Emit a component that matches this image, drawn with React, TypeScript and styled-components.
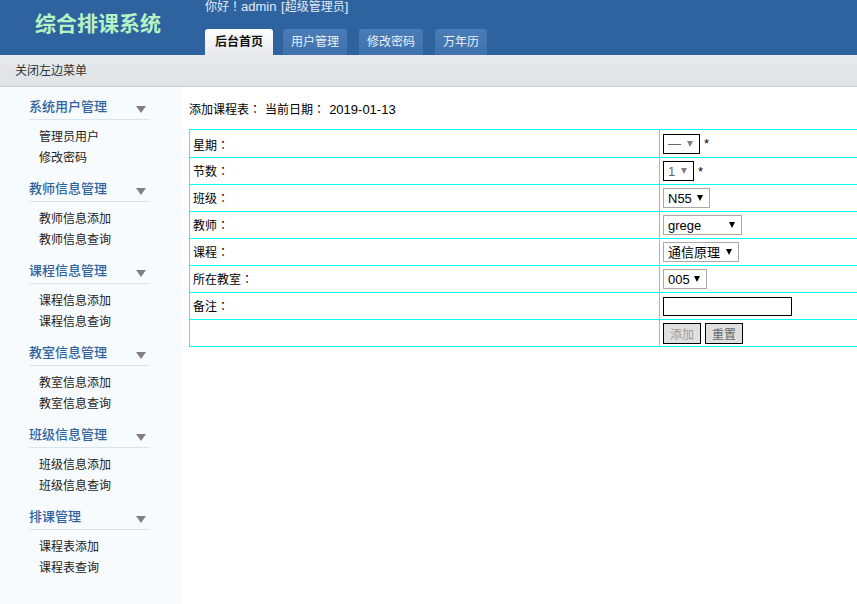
import React from 'react'
import styled, { createGlobalStyle } from 'styled-components'

const menu = [
  { title: '系统用户管理', items: ['管理员用户', '修改密码'] },
  { title: '教师信息管理', items: ['教师信息添加', '教师信息查询'] },
  { title: '课程信息管理', items: ['课程信息添加', '课程信息查询'] },
  { title: '教室信息管理', items: ['教室信息添加', '教室信息查询'] },
  { title: '班级信息管理', items: ['班级信息添加', '班级信息查询'] },
  { title: '排课管理', items: ['课程表添加', '课程表查询'] },
]

const tabs = ['后台首页', '用户管理', '修改密码', '万年历']

const App = () => {
  return (
    <Page>
      <GlobalStyle />
      <Header>
        <Logo>综合排课系统</Logo>
        <HeaderRight>
          <Welcome>你好<Punct>！</Punct><Latin>admin [</Latin>超级管理员<Latin>]</Latin></Welcome>
          <Tabs>
            {tabs.map((t, i) => (
              <Tab key={t} $active={i === 0}>{t}</Tab>
            ))}
          </Tabs>
        </HeaderRight>
      </Header>
      <SubBar>关闭左边菜单</SubBar>
      <Body>
        <Sidebar>
          {menu.map((m) => (
            <MenuGroup key={m.title}>
              <MenuTitle>
                {m.title}
                <Caret />
              </MenuTitle>
              {m.items.map((x) => (
                <MenuItem key={x}>{x}</MenuItem>
              ))}
            </MenuGroup>
          ))}
        </Sidebar>
        <Main>
          <Crumb>添加课程表<Punct>：</Punct> 当前日期<Punct>：</Punct> <Latin>2019-01-13</Latin></Crumb>
          <FormTable>
            <tbody>
              <tr>
                <LabelCell>星期<Punct>：</Punct></LabelCell>
                <FieldCell>
                  <SelectWrap $strong>
                    <Select $strong $w={37}><option>—</option></Select>
                  </SelectWrap>
                  <Star>*</Star>
                </FieldCell>
              </tr>
              <tr>
                <LabelCell>节数<Punct>：</Punct></LabelCell>
                <FieldCell>
                  <SelectWrap $strong>
                    <Select $strong $w={31}><option>1</option></Select>
                  </SelectWrap>
                  <Star>*</Star>
                </FieldCell>
              </tr>
              <tr>
                <LabelCell>班级<Punct>：</Punct></LabelCell>
                <FieldCell>
                  <SelectWrap>
                    <Select $w={47}><option>N55</option></Select>
                  </SelectWrap>
                </FieldCell>
              </tr>
              <tr>
                <LabelCell>教师<Punct>：</Punct></LabelCell>
                <FieldCell>
                  <SelectWrap>
                    <Select $w={79}><option>grege</option></Select>
                  </SelectWrap>
                </FieldCell>
              </tr>
              <tr>
                <LabelCell>课程<Punct>：</Punct></LabelCell>
                <FieldCell>
                  <SelectWrap>
                    <Select $w={76}><option>通信原理</option></Select>
                  </SelectWrap>
                </FieldCell>
              </tr>
              <tr>
                <LabelCell>所在教室<Punct>：</Punct></LabelCell>
                <FieldCell>
                  <SelectWrap>
                    <Select $w={44}><option>005</option></Select>
                  </SelectWrap>
                </FieldCell>
              </tr>
              <tr>
                <LabelCell>备注<Punct>：</Punct></LabelCell>
                <FieldCell><TextInput type="text" /></FieldCell>
              </tr>
              <tr>
                <LabelCell />
                <FieldCell>
                  <Buttons>
                    <Btn $faded>添加</Btn>
                    <Btn>重置</Btn>
                  </Buttons>
                </FieldCell>
              </tr>
            </tbody>
          </FormTable>
        </Main>
      </Body>
    </Page>
  )
}

export default App

const GlobalStyle = createGlobalStyle`
  html, body {
    margin: 0;
    padding: 0;
    height: 100%;
    overflow: hidden;
    background: #fff;
  }
  body {
    font-family: "Liberation Sans", "Noto Sans CJK SC", sans-serif;
    font-size: 12px;
    color: #000;
  }
`
const Page = styled.div`
  width: 857px;
  height: 604px;
  overflow: hidden;
  display: flex;
  flex-direction: column;
`
const Punct = styled.span`
  font-family: "Noto Sans CJK TC", sans-serif;
`
const Latin = styled.span`
  font-size: 13px;
`
const Header = styled.div`
  height: 55px;
  flex: none;
  background: #2f639f;
  display: flex;
`
const Logo = styled.div`
  width: 205px;
  box-sizing: border-box;
  padding: 9px 0 0 35px;
  font-size: 21px;
  line-height: 30px;
  font-weight: bold;
  color: #b5f2c4;
`
const HeaderRight = styled.div`
  display: flex;
  flex-direction: column;
  justify-content: space-between;
`
const Welcome = styled.div`
  font-size: 12px;
  line-height: 14px;
  margin-top: -1px;
  word-spacing: 1px;
  color: #e3ebf4;
  white-space: nowrap;
`
const Tabs = styled.div`
  display: flex;
  gap: 12px;
`
const Tab = styled.div<{ $active?: boolean }>`
  height: 26px;
  line-height: 26px;
  box-sizing: border-box;
  padding: 0 ${(p) => (p.$active ? '10px' : '8px')};
  margin-right: ${(p) => (p.$active ? '-2px' : '0')};
  font-size: 12px;
  text-align: center;
  border-radius: 3px 3px 0 0;
  font-weight: ${(p) => (p.$active ? 'bold' : 'normal')};
  color: ${(p) => (p.$active ? '#111' : '#e8eff6')};
  background: ${(p) => (p.$active ? 'linear-gradient(#fff, #e6e9ec)' : 'linear-gradient(#4a7db8, #3f72ad)')};
`
const SubBar = styled.div`
  height: 31px;
  flex: none;
  padding-left: 15px;
  line-height: 33px;
  font-size: 12px;
  color: #333;
  background: linear-gradient(#e8eaec, #dfe3e6);
  border-bottom: 1px solid #c6ced4;
`
const Body = styled.div`
  flex: 1;
  display: flex;
  min-height: 0;
`
const Sidebar = styled.div`
  width: 181px;
  flex: none;
  box-sizing: border-box;
  padding: 8px 0 0 29px;
  background: #f7fbfd;
`
const MenuGroup = styled.div`
  width: 120px;
  height: 82px;
`
const MenuTitle = styled.div`
  position: relative;
  height: 24px;
  line-height: 24px;
  font-size: 13px;
  font-weight: 500;
  color: #2f639f;
  border-bottom: 1px solid #d9e3ec;
  margin-bottom: 7px;
`
const Caret = styled.span`
  position: absolute;
  right: 3px;
  top: 11px;
  width: 0;
  height: 0;
  border-left: 5px solid transparent;
  border-right: 5px solid transparent;
  border-top: 7px solid #808080;
`
const MenuItem = styled.div`
  padding-left: 10px;
  height: 21px;
  line-height: 21px;
  font-size: 12px;
  color: #222;
`
const Main = styled.div`
  flex: 1;
  min-width: 0;
  padding-left: 8px;
`
const Crumb = styled.div`
  height: 28px;
  line-height: 16px;
  padding-top: 14px;
  font-size: 12px;
  white-space: pre;
  word-spacing: 0.7px;
`
const FormTable = styled.table`
  border-collapse: collapse;
  width: 900px;
  table-layout: fixed;
  tr:first-child td {
    height: 27px;
  }
  tr:first-child td:first-child {
    padding-top: 1px;
    padding-bottom: 0;
  }
`
const LabelCell = styled.td`
  width: 470px;
  height: 26px;
  padding: 0 0 2px 3px;
  box-sizing: border-box;
  border: 1px solid #00ffff;
  font-size: 12px;
`
const FieldCell = styled.td`
  height: 26px;
  padding: 0 0 0 3px;
  border: 1px solid #00ffff;
  font-size: 12px;
`
const SelectWrap = styled.span<{ $strong?: boolean }>`
  position: relative;
  display: inline-block;
  vertical-align: middle;
  line-height: 0;
  &::after {
    content: '';
    position: absolute;
    right: 7px;
    top: 7px;
    width: 0;
    height: 0;
    border-left: 3px solid transparent;
    border-right: 3px solid transparent;
    border-top: 6px solid ${(p) => (p.$strong ? '#808080' : '#000')};
    pointer-events: none;
  }
`
const Select = styled.select<{ $strong?: boolean; $w: number }>`
  appearance: none;
  width: ${(p) => p.$w}px;
  height: 20px;
  padding: 0 0 0 4px;
  font-family: "Liberation Sans", "Noto Sans CJK SC", sans-serif;
  font-size: 13px;
  background: #fff;
  border: 1px solid ${(p) => (p.$strong ? '#000' : '#a9a9a9')};
  border-radius: 0;
  color: ${(p) => (p.$strong ? '#666' : '#000')};
`
const Star = styled.span`
  margin-left: 4px;
  font-size: 13px;
  vertical-align: middle;
`
const TextInput = styled.input`
  display: block;
  width: 129px;
  height: 19px;
  box-sizing: border-box;
  padding: 0;
  border: 1px solid #000;
  background: #fff;
`
const Buttons = styled.div`
  display: flex;
  gap: 4px;
`
const Btn = styled.button<{ $faded?: boolean }>`
  width: 38px;
  height: 21px;
  padding: 0;
  font-family: "Liberation Sans", "Noto Sans CJK SC", sans-serif;
  font-size: 12px;
  color: ${(p) => (p.$faded ? '#999' : '#666')};
  background: #e0e0e0;
  border: 1px solid #000;
`
